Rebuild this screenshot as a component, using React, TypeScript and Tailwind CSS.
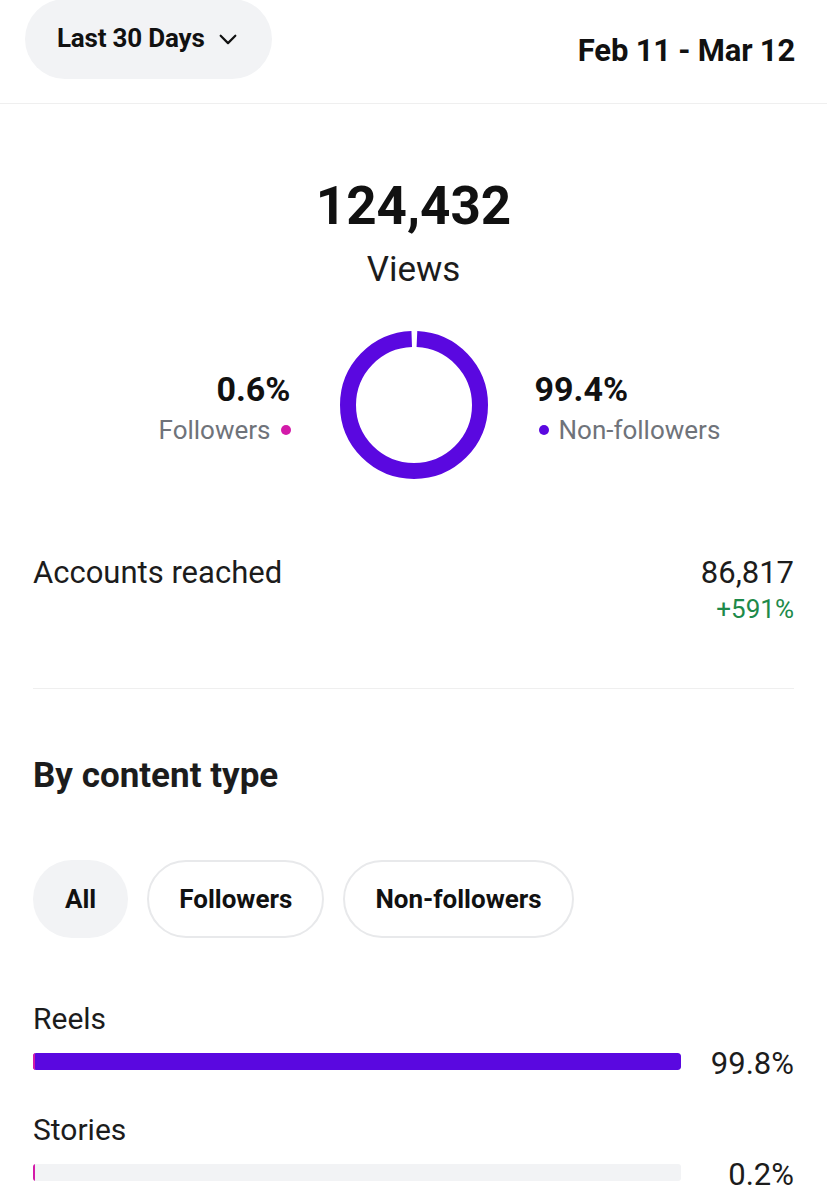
import React from "react";

const PURPLE = "#5a08e0";
const PINK = "#d31aa9";

function Donut() {
  const r = 66;
  const c = 2 * Math.PI * r;
  const gap = 6;
  return (
    <svg width="150" height="150" viewBox="0 0 150 150" className="shrink-0">
      <g transform="rotate(-90 75 75)">
        <circle
          cx="75"
          cy="75"
          r={r}
          fill="none"
          stroke={PURPLE}
          strokeWidth="16"
          strokeDasharray={`${c - gap} ${gap}`}
          strokeDashoffset={-gap / 2}
        />
      </g>
    </svg>
  );
}

function Bar({ label, pct, fill }: { label: string; pct: string; fill: number }) {
  return (
    <div className="flex flex-col">
      <div className="text-[30px] leading-[36px] text-[#1c1c1c]">{label}</div>
      <div className="flex items-center h-[17px] mt-[16px]">
        <div className="relative w-[648px] h-[17px] rounded-[3px] bg-[#f2f3f5] overflow-hidden">
          <div className="absolute left-0 top-0 h-full rounded-[3px]" style={{ width: `${fill}%`, background: PURPLE }} />
          <div className="absolute left-0 top-0 h-full w-[2px]" style={{ background: PINK }} />
        </div>
        <div className="flex-1 text-right text-[31px] leading-[36px] text-[#1c1c1c] mt-[5px]">{pct}</div>
      </div>
    </div>
  );
}

export default function App() {
  return (
    <div className="w-[827px] h-[1200px] bg-white overflow-hidden" style={{ fontFamily: "Roboto, 'Noto Sans', sans-serif" }}>
      {/* Header */}
      <div className="flex items-center justify-between pl-[25px] pr-[32px] h-[104px] border-b border-[#efefef]">
        <div className="flex items-center gap-[12px] h-[80px] -mt-[26px] pl-[32px] pr-[33px] rounded-full bg-[#f2f3f5]">
          <span className="text-[26px] font-bold text-[#111] tracking-[-0.2px]">Last 30 Days</span>
          <svg width="22" height="22" viewBox="0 0 24 24" fill="none" stroke="#111" strokeWidth="2.4" strokeLinecap="round" strokeLinejoin="round">
            <path d="M4 8.5l8 8 8-8" />
          </svg>
        </div>
        <span className="text-[31px] font-bold text-[#111] tracking-[-0.2px]">Feb 11 - Mar 12</span>
      </div>

      {/* Views */}
      <div className="flex flex-col items-center pt-[72px]">
        <div className="text-[53px] leading-[60px] font-bold text-[#111]">124,432</div>
        <div className="text-[35px] leading-[40px] text-[#1c1c1c] mt-[14px]">Views</div>
      </div>

      {/* Donut row */}
      <div className="flex items-center justify-center mt-[40px]">
        <div className="flex flex-col items-end w-[260px] pr-[48px] pt-[5px]">
          <div className="text-[34px] leading-[40px] font-bold text-[#111]">0.6%</div>
          <div className="flex items-center gap-[10px] mt-[5px]">
            <span className="text-[26px] leading-[32px] text-[#6f737a]">Followers</span>
            <span className="w-[10px] h-[10px] rounded-full" style={{ background: PINK }} />
          </div>
        </div>
        <Donut />
        <div className="flex flex-col items-start w-[260px] pl-[46px] pt-[5px]">
          <div className="text-[34px] leading-[40px] font-bold text-[#111]">99.4%</div>
          <div className="flex items-center gap-[10px] mt-[5px] pl-[4px]">
            <span className="w-[10px] h-[10px] rounded-full" style={{ background: PURPLE }} />
            <span className="text-[26px] leading-[32px] text-[#6f737a]">Non-followers</span>
          </div>
        </div>
      </div>

      {/* Accounts reached */}
      <div className="mx-[33px] mt-[75px] pb-[64px] border-b border-[#efefef] flex justify-between">
        <div className="text-[31px] leading-[36px] text-[#1c1c1c]">Accounts reached</div>
        <div className="flex flex-col items-end">
          <div className="text-[31px] leading-[36px] text-[#1c1c1c]">86,817</div>
          <div className="text-[26px] leading-[30px] text-[#1e8a4a] mt-[3px]">+591%</div>
        </div>
      </div>

      {/* By content type */}
      <div className="px-[33px]">
        <div className="text-[35px] leading-[40px] font-bold text-[#1c1c1c] mt-[67px]">By content type</div>

        <div className="flex gap-[19px] mt-[64px]">
          <div className="h-[78px] px-[32px] flex items-center rounded-full bg-[#f2f3f5] text-[26px] font-bold text-[#111]">All</div>
          <div className="h-[78px] px-[30px] flex items-center rounded-full border-2 border-[#e8e9eb] text-[26px] font-bold text-[#111]">Followers</div>
          <div className="h-[78px] px-[30px] flex items-center rounded-full border-2 border-[#e8e9eb] text-[26px] font-bold text-[#111]">Non-followers</div>
        </div>

        <div className="mt-[63px] flex flex-col gap-[42px]">
          <Bar label="Reels" pct="99.8%" fill={100} />
          <Bar label="Stories" pct="0.2%" fill={0} />
        </div>
      </div>
    </div>
  );
}
